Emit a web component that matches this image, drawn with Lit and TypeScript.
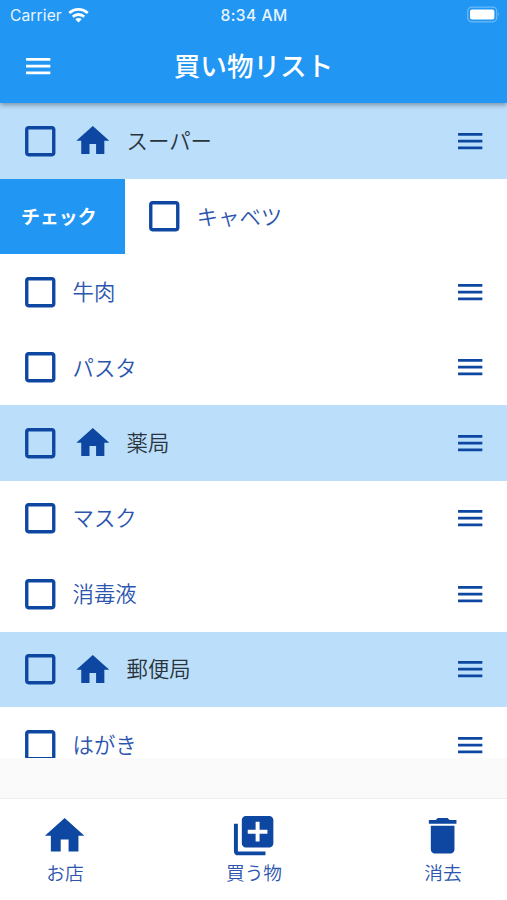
import { LitElement, html, css, svg } from "lit";
import { customElement, property } from "lit/decorators.js";
import { classMap } from "lit/directives/class-map.js";

const ICONS = {
  menu: "M3 18h18v-2H3v2zm0-5h18v-2H3v2zm0-7v2h18V6H3z",
  box: "M19 5v14H5V5h14m0-2H5c-1.1 0-2 .9-2 2v14c0 1.1.9 2 2 2h14c1.1 0 2-.9 2-2V5c0-1.1-.9-2-2-2z",
  home: "M10 20v-6h4v6h5v-8h3L12 3 2 12h3v8z",
  add: "M4 6H2v14c0 1.1.9 2 2 2h14v-2H4V6zm16-4H8c-1.1 0-2 .9-2 2v12c0 1.1.9 2 2 2h12c1.1 0 2-.9 2-2V4c0-1.1-.9-2-2-2zm-1 9h-4v4h-2v-4H9V9h4V5h2v4h4v2z",
  trash: "M6 19c0 1.1.9 2 2 2h8c1.1 0 2-.9 2-2V7H6v12zM19 4h-3.5l-1-1h-5l-1 1H5v2h14V4z",
};
type IconName = keyof typeof ICONS;

@customElement("md-icon")
export class MdIcon extends LitElement {
  @property() name: IconName = "menu";
  static styles = css`
    :host { display: block; flex: none; width: 32.4px; height: 32.4px; }
    svg { display: block; width: 100%; height: 100%; fill: currentColor; }
  `;
  render() {
    return html`<svg viewBox="0 0 24 24">${svg`<path d=${ICONS[this.name]}></path>`}</svg>`;
  }
}

@customElement("list-row")
export class ListRow extends LitElement {
  @property() label = "";
  @property({ type: Boolean }) shop = false;
  @property() action = "";
  static styles = css`
    :host { display: flex; flex: none; height: 75.47px; overflow: hidden; }
    .action {
      flex: none; width: 125px; box-sizing: border-box; padding: 0 0 2px 21px;
      display: flex; align-items: center;
      background: #2196f3; color: #fff; font-size: 18.9px; font-weight: 700;
    }
    .row {
      flex: none; width: 507px; box-sizing: border-box; padding: 0 20.6px 0 19.7px;
      display: flex; align-items: center; color: #0d47a1; background: #fff;
    }
    .slid { width: 508px; padding-left: 18.9px; }
    .shop { background: #bbdefb; }
    .large { width: 40.5px; height: 40.5px; }
    .home { width: 39.6px; height: 39.6px; margin-left: 13px; }
    .label { flex: 1; margin-left: 12.3px; padding-bottom: 2px; font-size: 21.4px; line-height: 30px; font-weight: 350; color: #2b55ae; }
    .shop .label { margin-left: 13.8px; color: #2a343c; }
  `;
  render() {
    return html`
      ${this.action ? html`<div class="action">${this.action}</div>` : ""}
      <div class=${classMap({ row: true, shop: this.shop, slid: !!this.action })}>
        <md-icon class="large" name="box"></md-icon>
        ${this.shop ? html`<md-icon class="home" name="home"></md-icon>` : ""}
        <span class="label">${this.label}</span>
        <md-icon name="menu"></md-icon>
      </div>`;
  }
}

const ROWS = [
  { label: "スーパー", shop: true },
  { label: "キャベツ", action: "チェック" },
  { label: "牛肉" },
  { label: "パスタ" },
  { label: "薬局", shop: true },
  { label: "マスク" },
  { label: "消毒液" },
  { label: "郵便局", shop: true },
  { label: "はがき" },
];

const TABS: { icon: IconName; label: string }[] = [
  { icon: "home", label: "お店" },
  { icon: "add", label: "買う物" },
  { icon: "trash", label: "消去" },
];

@customElement("app-root")
export class AppRoot extends LitElement {
  static styles = css`
    :host {
      display: flex; flex-direction: column; width: 507px; height: 900px; overflow: hidden;
      background: #fafafa; font-family: "Noto Sans CJK JP", sans-serif;
    }
    header {
      flex: none; height: 103.4px; background: #2196f3; color: #fff; z-index: 1;
      box-shadow: 0 2px 5px rgba(0, 0, 0, 0.35);
    }
    .status {
      height: 29px; display: grid; grid-template-columns: 1fr auto 1fr; align-items: center;
      padding: 0 7px 0 10px; font-family: Inter, sans-serif; font-size: 15.6px; color: #e9f5fe;
    }
    .carrier { display: flex; align-items: center; gap: 6px; letter-spacing: 0.1px; }
    .carrier span, .time { padding-top: 1px; }
    .wifi { width: 21px; height: 16px; }
    .time { font-weight: 500; letter-spacing: 0.45px; margin-left: -2px; }
    .battery { width: 33px; height: 17px; justify-self: end; }
    .bar { height: 74px; display: grid; grid-template-columns: 1fr auto 1fr; align-items: center; padding: 0 22.3px; }
    h1 { margin: 0; padding-bottom: 2px; font-size: 26.6px; line-height: 40px; font-weight: 500; }
    .list { flex: none; height: 654.8px; overflow: hidden; display: flex; flex-direction: column; }
    nav {
      margin-top: auto; height: 102.5px; box-sizing: border-box; background: #fff;
      border-top: 1px solid #eee; display: flex; justify-content: space-between; padding: 13.5px 18px 0 19px;
      color: #0d47a1;
    }
    .tab { width: 92px; display: flex; flex-direction: column; align-items: center; }
    .tab md-icon { width: 47.3px; height: 47.3px; }
    .tab span { font-size: 18.7px; line-height: 25px; font-weight: 350; color: #2b55ae; }
  `;
  render() {
    return html`
      <header>
        <div class="status">
          <div class="carrier">
            <span>Carrier</span>
            <svg class="wifi" viewBox="0 0 21 16">
              <g fill="none" stroke="#fff" stroke-width="2.8">
                <path d="M1.3 6.1a13.2 13.2 0 0 1 18.4 0"></path>
                <path d="M4.8 9.8a8.2 8.2 0 0 1 11.4 0"></path>
              </g>
              <path fill="#fff" d="M10.5 15.5l-3.2-3.2a4.6 4.6 0 0 1 6.4 0z"></path>
            </svg>
          </div>
          <span class="time">8:34 AM</span>
          <svg class="battery" viewBox="0 0 33 17">
            <rect x="0.7" y="1.2" width="29" height="14.6" rx="4" fill="none" stroke="#6dbaf8" stroke-width="1.2"></rect>
            <rect x="3" y="3.6" width="24.4" height="10" rx="2" fill="#fff"></rect>
            <path d="M31 6.3q1.7 2.2 0 4.4z" fill="#8fcaf9"></path>
          </svg>
        </div>
        <div class="bar">
          <md-icon name="menu"></md-icon>
          <h1>買い物リスト</h1>
        </div>
      </header>
      <div class="list">
        ${ROWS.map((r) => html`<list-row .label=${r.label} .shop=${!!r.shop} .action=${r.action ?? ""}></list-row>`)}
      </div>
      <nav>
        ${TABS.map((t) => html`<div class="tab"><md-icon .name=${t.icon}></md-icon><span>${t.label}</span></div>`)}
      </nav>`;
  }
}
